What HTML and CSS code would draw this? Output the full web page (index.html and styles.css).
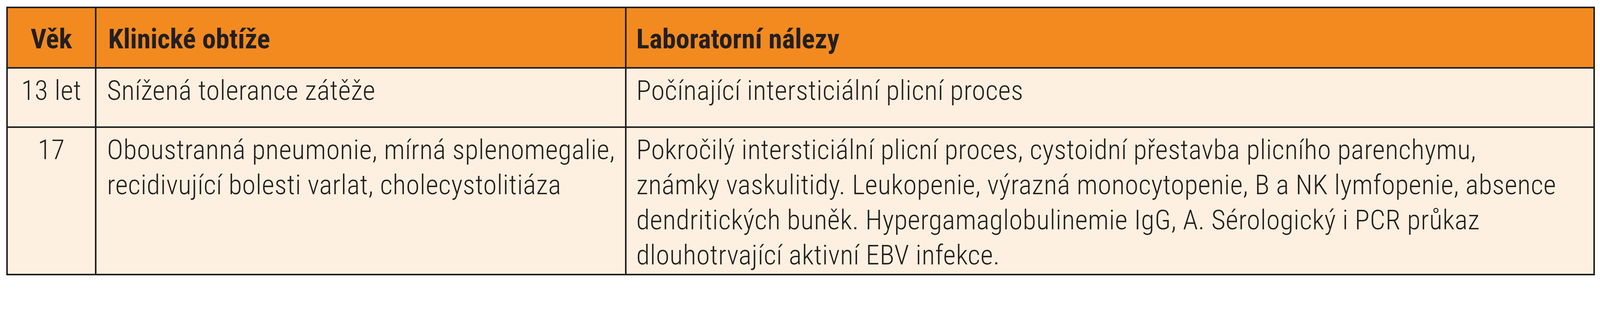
FILE: index.html
```html
<!DOCTYPE html>
<html lang="cs">
<head>
<meta charset="utf-8">
<title>Tabulka</title>
<link rel="stylesheet" href="styles.css">
</head>
<body>
<div class="table" role="table">
  <div class="cell head c1" role="columnheader">Věk</div>
  <div class="cell head c2" role="columnheader">Klinické obtíže</div>
  <div class="cell head c3" role="columnheader">Laboratorní nálezy</div>

  <div class="cell body c1 r1" role="cell">13 let</div>
  <div class="cell body c2 r1" role="cell">Snížená tolerance zátěže</div>
  <div class="cell body c3 r1" role="cell">Počínající intersticiální plicní proces</div>

  <div class="cell body c1 r2" role="cell">17</div>
  <div class="cell body c2 r2" role="cell">Oboustranná pneumonie, mírná splenomegalie,<br>recidivující bolesti varlat, cholecystolitiáza</div>
  <div class="cell body c3 r2" role="cell">Pokročilý intersticiální plicní proces, cystoidní přestavba plicního parenchymu,<br>známky vaskulitidy. Leukopenie, výrazná monocytopenie, B a NK lymfopenie, absence<br>dendritických buněk. Hypergamaglobulinemie IgG, A. Sérologický i PCR průkaz<br>dlouhotrvající aktivní EBV infekce.</div>
</div>
</body>
</html>
```

FILE: styles.css
```css
html, body {
  margin: 0;
  background: #ffffff;
}

body {
  padding: 17px 0 0 16px;
  color: #231f20;
}

.table {
  display: grid;
  grid-template-columns: 227px 1357px 2479px;
  grid-template-rows: 155px 152px 378px;
  width: 4063px;
  border-top: 4px solid #231f20;
  border-left: 4px solid #231f20;
  box-sizing: content-box;
}

.cell {
  box-sizing: border-box;
  border-right: 4px solid #231f20;
  border-bottom: 4px solid #231f20;
  font-size: 70px;
  line-height: 90px;
  white-space: nowrap;
  overflow: hidden;
}

.head {
  background: #f28a20;
  font-family: "Roboto", "Liberation Sans", sans-serif;
  font-stretch: 75%;
  font-weight: bold;
  padding-top: 34px;
}

.body {
  background: #fdf0e0;
  font-family: "Roboto", "Liberation Sans", sans-serif;
  font-stretch: 87%;
  font-weight: 300;
  letter-spacing: 0.6px;
  padding-top: 11px;
}

.c1 {
  text-align: center;
}

.head.c2 {
  padding-left: 30px;
}

.body.c2 {
  padding-left: 27px;
}

.c3 {
  padding-left: 25px;
}
```
